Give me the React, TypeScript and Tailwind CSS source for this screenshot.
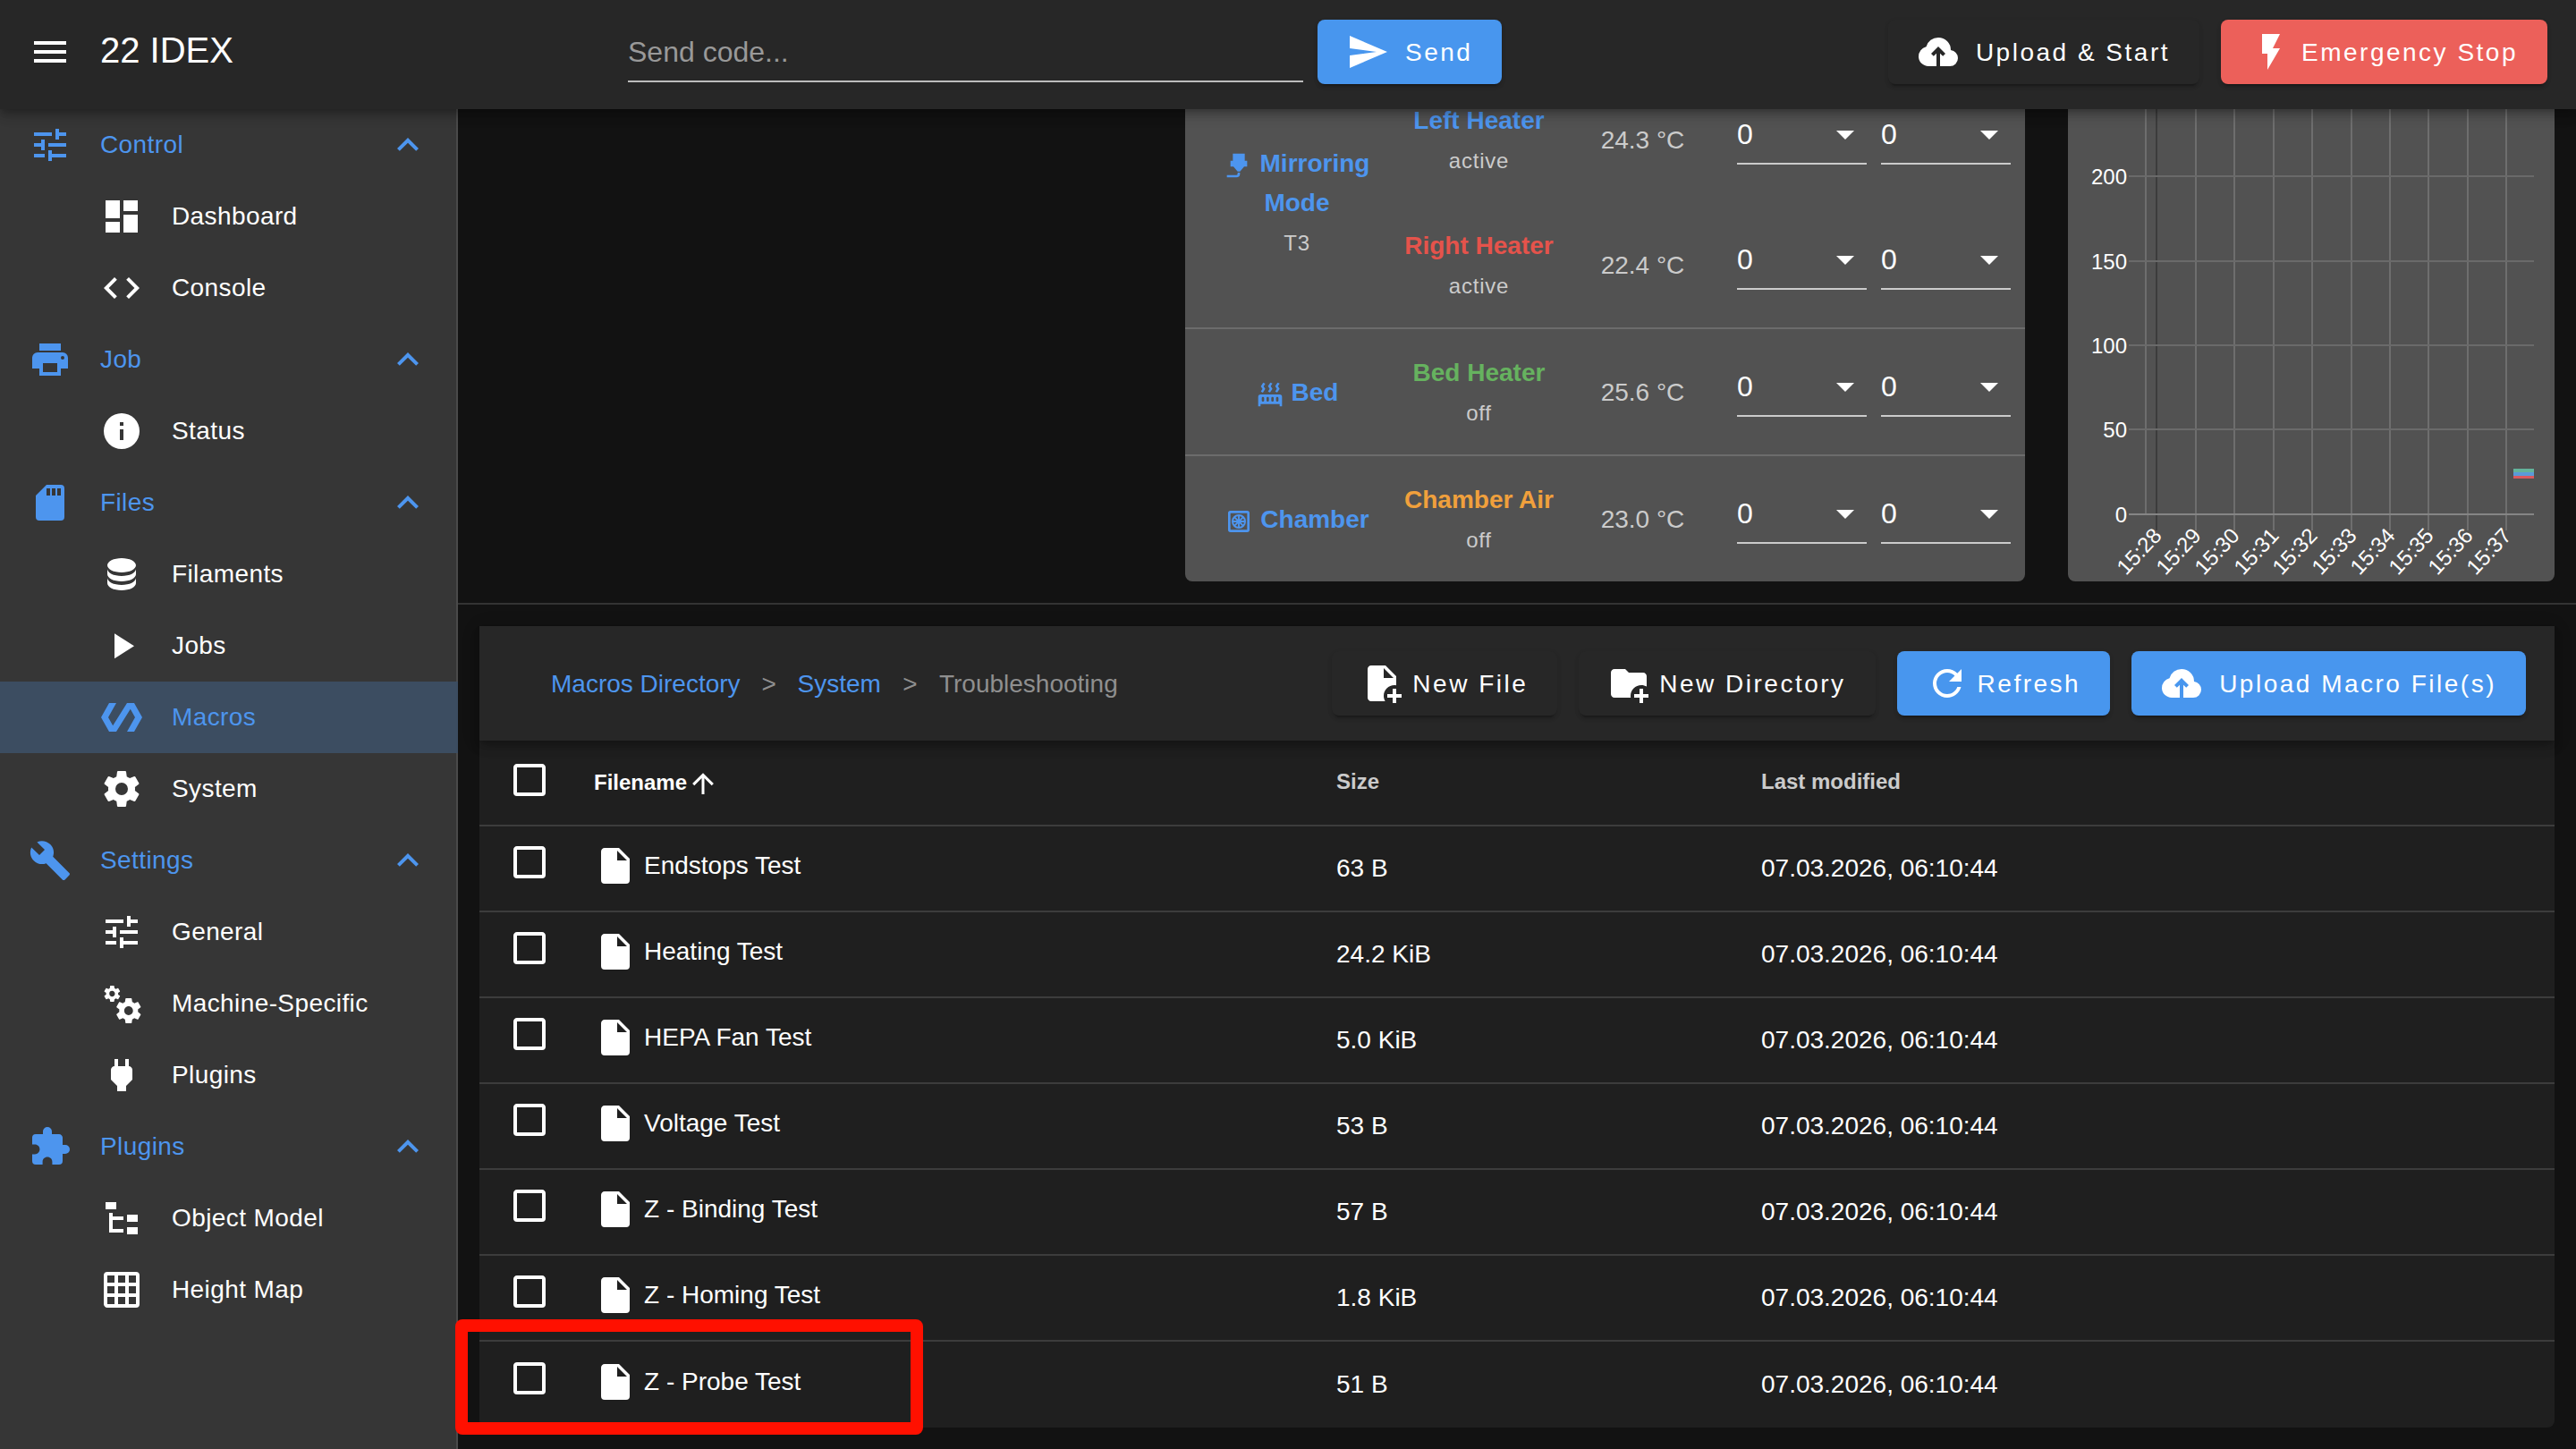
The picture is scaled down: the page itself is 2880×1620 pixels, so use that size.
import { useState } from "react";

const icons = {
  menu: "M3,6H21V8H3V6M3,11H21V13H3V11M3,16H21V18H3V16Z",
  tune: "M3,17V19H9V17H3M3,5V7H13V5H3M13,21V19H21V17H13V15H11V21H13M7,9V11H3V13H7V15H9V9H7M21,13V11H11V13H21M15,9H17V7H21V5H17V3H15V9Z",
  dashboard: "M13,3V9H21V3M13,21H21V11H13M3,21H11V15H3M3,13H11V3H3V13Z",
  code: "M14.6,16.6L19.2,12L14.6,7.4L16,6L22,12L16,18L14.6,16.6M9.4,16.6L4.8,12L9.4,7.4L8,6L2,12L8,18L9.4,16.6Z",
  printer:
    "M18,3H6V7H18M19,12A1,1 0 0,1 18,11A1,1 0 0,1 19,10A1,1 0 0,1 20,11A1,1 0 0,1 19,12M16,19H8V14H16M19,8H5A3,3 0 0,0 2,11V17H6V21H18V17H22V11A3,3 0 0,0 19,8Z",
  info: "M13,9H11V7H13M13,17H11V11H13M12,2A10,10 0 0,0 2,12A10,10 0 0,0 12,22A10,10 0 0,0 22,12A10,10 0 0,0 12,2Z",
  sd: "M18,8H16V4H18M15,8H13V4H15M12,8H10V4H12M18,2H10L4,8V20A2,2 0 0,0 6,22H18A2,2 0 0,0 20,20V4A2,2 0 0,0 18,2Z",
  database:
    "M12,3C7.58,3 4,4.79 4,7C4,9.21 7.58,11 12,11C16.42,11 20,9.21 20,7C20,4.79 16.42,3 12,3M4,9V12C4,14.21 7.58,16 12,16C16.42,16 20,14.21 20,12V9C20,11.21 16.42,13 12,13C7.58,13 4,11.21 4,9M4,14V17C4,19.21 7.58,21 12,21C16.42,21 20,19.21 20,17V14C20,16.21 16.42,18 12,18C7.58,18 4,16.21 4,14Z",
  play: "M8,5.14V19.14L19,12.14L8,5.14Z",
  polymer:
    "M19,4H15L7.1,16.63L4.5,12L9,4H5L0.5,12L5,20H9L16.89,7.37L19.5,12L15,20H19L23.5,12L19,4Z",
  cog: "M12,15.5A3.5,3.5 0 0,1 8.5,12A3.5,3.5 0 0,1 12,8.5A3.5,3.5 0 0,1 15.5,12A3.5,3.5 0 0,1 12,15.5M19.43,12.97C19.47,12.65 19.5,12.33 19.5,12C19.5,11.67 19.47,11.34 19.43,11L21.54,9.37C21.73,9.22 21.78,8.95 21.66,8.73L19.66,5.27C19.54,5.05 19.27,4.96 19.05,5.05L16.56,6.05C16.04,5.66 15.5,5.32 14.87,5.07L14.5,2.42C14.46,2.18 14.25,2 14,2H10C9.75,2 9.54,2.18 9.5,2.42L9.13,5.07C8.5,5.32 7.96,5.66 7.44,6.05L4.95,5.05C4.73,4.96 4.46,5.05 4.34,5.27L2.34,8.73C2.21,8.95 2.27,9.22 2.46,9.37L4.57,11C4.53,11.34 4.5,11.67 4.5,12C4.5,12.33 4.53,12.65 4.57,12.97L2.46,14.63C2.27,14.78 2.21,15.05 2.34,15.27L4.34,18.73C4.46,18.95 4.73,19.03 4.95,18.95L7.44,17.94C7.96,18.34 8.5,18.68 9.13,18.93L9.5,21.58C9.54,21.82 9.75,22 10,22H14C14.25,22 14.46,21.82 14.5,21.58L14.87,18.93C15.5,18.67 16.04,18.34 16.56,17.94L19.05,18.95C19.27,19.03 19.54,18.95 19.66,18.73L21.66,15.27C21.78,15.05 21.73,14.78 21.54,14.63L19.43,12.97Z",
  wrench:
    "M22.7,19L13.6,9.9C14.5,7.6 14,4.9 12.1,3C10.1,1 7.1,0.6 4.7,1.7L9,6L6,9L1.6,4.7C0.4,7.1 0.9,10.1 2.9,12.1C4.8,14 7.5,14.5 9.8,13.6L18.9,22.7C19.3,23.1 19.9,23.1 20.3,22.7L22.6,20.4C23.1,20 23.1,19.3 22.7,19Z",
  cogs: "M15.9,18.45C17.25,18.45 18.35,17.35 18.35,16C18.35,14.65 17.25,13.55 15.9,13.55C14.54,13.55 13.45,14.65 13.45,16C13.45,17.35 14.54,18.45 15.9,18.45M21.1,16.68L22.58,17.84C22.71,17.95 22.75,18.13 22.66,18.29L21.26,20.71C21.17,20.86 21,20.92 20.83,20.86L19.09,20.16C18.73,20.44 18.33,20.67 17.91,20.85L17.64,22.7C17.62,22.87 17.47,23 17.3,23H14.5C14.32,23 14.18,22.87 14.15,22.7L13.89,20.85C13.46,20.67 13.07,20.44 12.71,20.16L10.96,20.86C10.81,20.92 10.62,20.86 10.54,20.71L9.14,18.29C9.05,18.13 9.09,17.95 9.22,17.84L10.7,16.68L10.65,16L10.7,15.31L9.22,14.16C9.09,14.05 9.05,13.86 9.14,13.71L10.54,11.29C10.62,11.13 10.81,11.07 10.96,11.13L12.71,11.84C13.07,11.56 13.46,11.32 13.89,11.15L14.15,9.29C14.18,9.13 14.32,9 14.5,9H17.3C17.47,9 17.62,9.13 17.64,9.29L17.91,11.15C18.33,11.32 18.73,11.56 19.09,11.84L20.83,11.13C21,11.07 21.17,11.13 21.26,11.29L22.66,13.71C22.75,13.86 22.71,14.05 22.58,14.16L21.1,15.31L21.15,16L21.1,16.68M6.69,8.07C7.56,8.07 8.26,7.37 8.26,6.5C8.26,5.63 7.56,4.92 6.69,4.92A1.58,1.58 0 0,0 5.11,6.5C5.11,7.37 5.82,8.07 6.69,8.07M10.03,6.94L11,7.68C11.07,7.75 11.09,7.87 11.03,7.97L10.13,9.53C10.08,9.63 9.96,9.67 9.86,9.63L8.74,9.18L8,9.62L7.81,10.81C7.79,10.92 7.7,11 7.59,11H5.79C5.67,11 5.58,10.92 5.56,10.81L5.4,9.62L4.64,9.18L3.52,9.63C3.41,9.67 3.3,9.63 3.24,9.53L2.34,7.97C2.28,7.87 2.31,7.75 2.39,7.68L3.34,6.94L3.31,6.5L3.34,6.06L2.39,5.32C2.31,5.25 2.28,5.13 2.34,5.03L3.24,3.47C3.3,3.37 3.41,3.33 3.52,3.37L4.63,3.82L5.4,3.38L5.56,2.19C5.58,2.08 5.67,2 5.79,2H7.59C7.7,2 7.79,2.08 7.81,2.19L8,3.38L8.74,3.82L9.86,3.37C9.96,3.33 10.08,3.37 10.13,3.47L11.03,5.03C11.09,5.13 11.07,5.25 11,5.32L10.03,6.06L10.06,6.5L10.03,6.94Z",
  plug: "M16,7V3H14V7H10V3H8V7H8C7,7 6,8 6,9V14.5L9.5,18V21H14.5V18L18,14.5V9C18,8 17,7 16,7Z",
  puzzle:
    "M20.5,11H19V7C19,5.89 18.1,5 17,5H13V3.5A2.5,2.5 0 0,0 10.5,1A2.5,2.5 0 0,0 8,3.5V5H4A2,2 0 0,0 2,7V10.8H3.5C5,10.8 6.2,12 6.2,13.5C6.2,15 5,16.2 3.5,16.2H2V20A2,2 0 0,0 4,22H7.8V20.5C7.8,19 9,17.8 10.5,17.8C12,17.8 13.2,19 13.2,20.5V22H17A2,2 0 0,0 19,20V16H20.5A2.5,2.5 0 0,0 23,13.5A2.5,2.5 0 0,0 20.5,11Z",
  tree: "M3,3H9V7H3V3M15,10H21V14H15V10M15,17H21V21H15V17M13,13H7V18H13V20H7L5,20V9H7V11H13V13Z",
  grid: "M10,4V8H14V4H10M16,4V8H20V4H16M16,10V14H20V10H16M16,16V20H20V16H16M14,20V16H10V20H14M8,20V16H4V20H8M8,14V10H4V14H8M8,8V4H4V8H8M10,14H14V10H10V14M4,2H20A2,2 0 0,1 22,4V20A2,2 0 0,1 20,22H4C2.92,22 2,21.1 2,20V4A2,2 0 0,1 4,2Z",
  chevronUp: "M7.41,15.41L12,10.83L16.59,15.41L18,14L12,8L6,14L7.41,15.41Z",
  send: "M2,21L23,12L2,3V10L17,12L2,14V21Z",
  cloudUpload:
    "M11 20H6.5Q4.22 20 2.61 18.43 1 16.85 1 14.58 1 12.63 2.17 11.1 3.35 9.57 5.25 9.15 5.88 6.85 7.75 5.43 9.63 4 12 4 14.93 4 16.96 6.04 19 8.07 19 11 20.73 11.2 21.86 12.5 23 13.78 23 15.5 23 17.38 21.69 18.69 20.38 20 18.5 20H13V12.85L14.6 14.4L16 13L12 9L8 13L9.4 14.4L11 12.85Z",
  flash: "M7,2V13H10V22L17,10H13L17,2H7Z",
  file: "M13,9V3.5L18.5,9M6,2C4.89,2 4,2.89 4,4V20A2,2 0 0,0 6,22H18A2,2 0 0,0 20,20V8L14,2H6Z",
  filePlus:
    "M14 2H6C4.89 2 4 2.89 4 4V20C4 21.11 4.89 22 6 22H13.81C13.28 21.09 13 20.05 13 19C13 15.69 15.69 13 19 13C19.34 13 19.67 13.03 20 13.08V8L14 2M13 9V3.5L18.5 9H13M23 20H20V23H18V20H15V18H18V15H20V18H23V20Z",
  folderPlus:
    "M13 19C13 19.34 13.04 19.67 13.09 20H4C2.9 20 2 19.11 2 18V6C2 4.89 2.89 4 4 4H10L12 6H20C21.1 6 22 6.89 22 8V13.81C21.12 13.3 20.1 13 19 13C15.69 13 13 15.69 13 19M20 18V15H18V18H15V20H18V23H20V20H23V18H20Z",
  refresh:
    "M17.65,6.35C16.2,4.9 14.21,4 12,4A8,8 0 0,0 4,12A8,8 0 0,0 12,20C15.73,20 18.84,17.45 19.73,14H17.65C16.83,16.33 14.61,18 12,18A6,6 0 0,1 6,12A6,6 0 0,1 12,6C13.66,6 15.14,6.69 16.22,7.78L13,11H20V4L17.65,6.35Z",
  arrowUp:
    "M13,20H11V8L5.5,13.5L4.08,12.08L12,4.16L19.92,12.08L18.5,13.5L13,8V20Z",
  checkbox:
    "M19,3H5C3.89,3 3,3.89 3,5V19A2,2 0 0,0 5,21H19A2,2 0 0,0 21,19V5C21,3.89 20.1,3 19,3M19,5V19H5V5H19Z",
  menuDown: "M7,10L12,15L17,10H7Z",
  nozzle:
    "M7,2H17V8H19V13H16.5L13,17H11L7.5,13H5V8H7V2M10,22H2V20H10A1,1 0 0,0 11,19V18H13V19A3,3 0 0,1 10,22Z",
  radiator:
    "M7.95,3L6.53,5.19L7.95,7.4H7.94L5.95,10.5L4.22,9.6L5.64,7.39L4.22,5.19L6.22,2.09L7.95,3M13.95,2.89L12.53,5.1L13.95,7.3L13.94,7.31L11.95,10.4L10.22,9.5L11.64,7.3L10.22,5.1L12.22,2L13.95,2.89M20,2.89L18.56,5.1L20,7.3V7.31L18,10.4L16.25,9.5L17.67,7.3L16.25,5.1L18.25,2L20,2.89M2,22V14A2,2 0 0,1 4,12H20A2,2 0 0,1 22,14V22H20V20H4V22H2M6,14A1,1 0 0,0 5,15V17A1,1 0 0,0 6,18A1,1 0 0,0 7,17V15A1,1 0 0,0 6,14M10,14A1,1 0 0,0 9,15V17A1,1 0 0,0 10,18A1,1 0 0,0 11,17V15A1,1 0 0,0 10,14M14,14A1,1 0 0,0 13,15V17A1,1 0 0,0 14,18A1,1 0 0,0 15,17V15A1,1 0 0,0 14,14M18,14A1,1 0 0,0 17,15V17A1,1 0 0,0 18,18A1,1 0 0,0 19,17V15A1,1 0 0,0 18,14Z",
  chamber:
    "M5,3H19A2,2 0 0,1 21,5V19A2,2 0 0,1 19,21H5A2,2 0 0,1 3,19V5A2,2 0 0,1 5,3M5,5V19H19V5H5M12,6A6,6 0 0,1 18,12A6,6 0 0,1 12,18A6,6 0 0,1 6,12A6,6 0 0,1 12,6M11.3,7.6A4.5,4.5 0 0,0 9.3,8.4L11.3,10.3V7.6M12.7,7.6V10.3L14.7,8.4A4.5,4.5 0 0,0 12.7,7.6M8.3,9.4A4.5,4.5 0 0,0 7.6,11.3H10.2L8.3,9.4M15.7,9.4L13.8,11.3H16.4A4.5,4.5 0 0,0 15.7,9.4M7.6,12.7A4.5,4.5 0 0,0 8.3,14.6L10.2,12.7H7.6M13.8,12.7L15.7,14.6A4.5,4.5 0 0,0 16.4,12.7H13.8M11.3,13.7L9.3,15.6A4.5,4.5 0 0,0 11.3,16.4V13.7M12.7,13.7V16.4A4.5,4.5 0 0,0 14.7,15.6L12.7,13.7Z",
};

type IconName = keyof typeof icons;

const Icon = ({
  name,
  className = "w-12 h-12",
}: {
  name: IconName;
  className?: string;
}) => (
  <svg viewBox="0 0 24 24" className={`shrink-0 ${className}`}>
    <path d={icons[name]} fill="currentColor" fillRule="evenodd" />
  </svg>
);

const menuGroups: {
  name: string;
  icon: IconName;
  items: { name: string; icon: IconName }[];
}[] = [
  {
    name: "Control",
    icon: "tune",
    items: [
      { name: "Dashboard", icon: "dashboard" },
      { name: "Console", icon: "code" },
    ],
  },
  { name: "Job", icon: "printer", items: [{ name: "Status", icon: "info" }] },
  {
    name: "Files",
    icon: "sd",
    items: [
      { name: "Filaments", icon: "database" },
      { name: "Jobs", icon: "play" },
      { name: "Macros", icon: "polymer" },
      { name: "System", icon: "cog" },
    ],
  },
  {
    name: "Settings",
    icon: "wrench",
    items: [
      { name: "General", icon: "tune" },
      { name: "Machine-Specific", icon: "cogs" },
      { name: "Plugins", icon: "plug" },
    ],
  },
  {
    name: "Plugins",
    icon: "puzzle",
    items: [
      { name: "Object Model", icon: "tree" },
      { name: "Height Map", icon: "grid" },
    ],
  },
];

const files = [
  { name: "Endstops Test", size: "63 B" },
  { name: "Heating Test", size: "24.2 KiB" },
  { name: "HEPA Fan Test", size: "5.0 KiB" },
  { name: "Voltage Test", size: "53 B" },
  { name: "Z - Binding Test", size: "57 B" },
  { name: "Z - Homing Test", size: "1.8 KiB" },
  { name: "Z - Probe Test", size: "51 B" },
];

const buttonShadow =
  "shadow-[0_6px_2px_-4px_rgba(0,0,0,0.2),0_4px_4px_0_rgba(0,0,0,0.1),0_2px_6px_0_rgba(0,0,0,0.06)]";

const Button = ({
  icon,
  label,
  color = "bg-[#272727]",
  gap = "gap-[10px]",
}: {
  icon: IconName;
  label: string;
  color?: string;
  gap?: string;
}) => (
  <button
    className={`h-[72px] pl-8 pr-[33px] flex items-center rounded-lg whitespace-nowrap text-[28px] leading-[40px] tracking-[2.5px] text-white cursor-pointer ${gap} ${color} ${buttonShadow}`}
  >
    <Icon name={icon} />
    <span className="mt-[2px]">{label}</span>
  </button>
);

const TempInput = () => (
  <div className="w-[145px] h-[70px] pt-[3px] flex items-center justify-between border-b-2 border-[#cbcbcb] text-[32px] text-white">
    <span>0</span>
    <Icon name="menuDown" />
  </div>
);

const HeaterRow = ({
  name,
  color,
  state,
  temp,
}: {
  name: string;
  color: string;
  state: string;
  temp: string;
}) => (
  <div className="h-[140px] flex">
    <div className="w-[156px] pt-[27px] pl-px flex flex-col items-center whitespace-nowrap">
      <span className={`text-[28px] leading-[44px] font-bold ${color}`}>
        {name}
      </span>
      <span className="pt-[3px] text-[24px] leading-[40px] tracking-[0.8px]">
        {state}
      </span>
    </div>
    <div className="w-[211px] pt-[2px] flex items-center justify-center text-[28px]">
      {temp}
    </div>
    <div className="pt-[28px] flex gap-4">
      <TempInput />
      <TempInput />
    </div>
  </div>
);

const ToolLabel = ({
  icon,
  label,
  second,
  sub,
}: {
  icon: IconName;
  label: string;
  second?: string;
  sub?: string;
}) => (
  <div className="w-[250px] pt-px flex flex-col items-center justify-center">
    <div className="flex items-center gap-2 text-[28px] leading-[44px] font-bold text-[#4d95ee]">
      <Icon name={icon} className="w-8 h-8 mt-[4px]" />
      {label}
    </div>
    {second && (
      <div className="text-[28px] leading-[44px] font-bold text-[#4d95ee]">
        {second}
      </div>
    )}
    {sub && (
      <div className="pt-[3px] text-[24px] leading-[40px] tracking-[0.8px]">
        {sub}
      </div>
    )}
  </div>
);

const yTicks = [
  { label: "200", y: 75 },
  { label: "150", y: 170 },
  { label: "100", y: 264 },
  { label: "50", y: 358 },
  { label: "0", y: 453 },
];

const xTicks = [
  { label: "15:28", x: 99 },
  { label: "15:29", x: 143 },
  { label: "15:30", x: 186 },
  { label: "15:31", x: 230 },
  { label: "15:32", x: 273 },
  { label: "15:33", x: 317 },
  { label: "15:34", x: 360 },
  { label: "15:35", x: 403 },
  { label: "15:36", x: 447 },
  { label: "15:37", x: 490 },
];

const TemperatureChart = () => (
  <svg width="544" height="528" viewBox="0 0 544 528" className="block">
    <line x1="87" x2="87" y1="0" y2="454" stroke="#6e6e6e" strokeWidth="2" />
    {xTicks.map(({ label, x }, i) => (
      <g key={label}>
        <line
          x1={x}
          x2={x}
          y1="0"
          y2="471"
          stroke={i === 0 ? "#3c3c3c" : "#6e6e6e"}
          strokeWidth="2"
        />
        <text
          transform={`translate(${x + 7} 478) rotate(-47)`}
          textAnchor="end"
          fontSize="24"
          fill="#fff"
        >
          {label}
        </text>
      </g>
    ))}
    {yTicks.map(({ label, y }) => (
      <g key={label}>
        <line
          x1="68"
          x2="521"
          y1={y}
          y2={y}
          stroke={label === "0" ? "#858585" : "#6a6a6a"}
          strokeWidth="2"
        />
        <text x="66" y={y + 9} textAnchor="end" fontSize="24" fill="#fff">
          {label}
        </text>
      </g>
    ))}
    {/* Latest samples */}
    <rect x="498" y="402" width="23" height="4" fill="#63b39b" />
    <rect x="498" y="406" width="23" height="4" fill="#5a9ad8" />
    <rect x="498" y="410" width="23" height="3" fill="#d9595f" />
  </svg>
);

const App = () => {
  const [active, setActive] = useState("Macros");

  return (
    <div className="relative w-[2880px] h-[1620px] overflow-hidden flex flex-col bg-[#121212] text-[#cbcbcb] font-['Liberation_Sans',Arial,sans-serif]">
      {/* App Bar */}
      <header className="relative z-10 h-[122px] shrink-0 flex items-start bg-[#272727] pl-8 pr-8 shadow-[0_4px_8px_-2px_rgba(0,0,0,0.2),0_8px_10px_0_rgba(0,0,0,0.14),0_2px_20px_0_rgba(0,0,0,0.12)]">
        <div className="w-[670px] pt-[34px] flex items-center gap-8 text-white">
          <Icon name="menu" />
          <span className="text-[40px] leading-[48px] -mt-1">22 IDEX</span>
        </div>
        <div className="w-[755px] h-[92px] pt-[34px] border-b-2 border-[#bdbdbd] text-[32px] leading-[48px] text-[#999999]">
          Send code...
        </div>
        <div className="pt-[22px] pl-4">
          <Button
            icon="send"
            label="Send"
            color="bg-[#4896ee]"
            gap="gap-[18px]"
          />
        </div>
        <div className="flex-1 pt-[22px] flex justify-end gap-6">
          <Button icon="cloudUpload" label="Upload & Start" gap="gap-[18px]" />
          <Button icon="flash" label="Emergency Stop" color="bg-[#ec605a]" />
        </div>
      </header>

      <div className="flex flex-1 min-h-0">
        {/* Sidebar */}
        <nav className="w-[512px] shrink-0 bg-[#363636] border-r-2 border-[#4a4a4a] text-[28px] tracking-[0.4px]">
          {menuGroups.map((group) => (
            <div key={group.name}>
              <div className="h-20 pl-8 pr-[30px] flex items-center gap-8 text-[#4d95ee]">
                <Icon name={group.icon} />
                <span className="flex-1">{group.name}</span>
                <Icon name="chevronUp" />
              </div>
              {group.items.map((item) => (
                <div
                  key={item.name}
                  onClick={() => setActive(item.name)}
                  className={`h-20 pl-28 flex items-center gap-8 cursor-pointer ${
                    active === item.name
                      ? "bg-[#3c4d61] text-[#4d95ee] -mr-[2px]"
                      : "text-white"
                  }`}
                >
                  <Icon name={item.icon} />
                  <span>{item.name}</span>
                </div>
              ))}
            </div>
          ))}
        </nav>

        <main className="flex-1 min-w-0 flex flex-col">
          {/* Heaters and chart */}
          <div className="h-[528px] shrink-0 flex justify-end gap-12 pr-6">
            <div className="w-[939px] overflow-hidden rounded-b-lg bg-[#525252]">
              <div className="-mt-9 flex">
                <ToolLabel
                  icon="nozzle"
                  label="Mirroring"
                  second="Mode"
                  sub="T3"
                />
                <div>
                  <HeaterRow
                    name="Left Heater"
                    color="text-[#4d95ee]"
                    state="active"
                    temp="24.3 °C"
                  />
                  <HeaterRow
                    name="Right Heater"
                    color="text-[#e5534b]"
                    state="active"
                    temp="22.4 °C"
                  />
                </div>
              </div>
              <div className="flex border-t-2 border-[#6c6c6c]">
                <ToolLabel icon="radiator" label="Bed" />
                <HeaterRow
                  name="Bed Heater"
                  color="text-[#66b25f]"
                  state="off"
                  temp="25.6 °C"
                />
              </div>
              <div className="flex border-t-2 border-[#6c6c6c]">
                <ToolLabel icon="chamber" label="Chamber" />
                <HeaterRow
                  name="Chamber Air"
                  color="text-[#f0a03c]"
                  state="off"
                  temp="23.0 °C"
                />
              </div>
            </div>
            <div className="w-[544px] overflow-hidden rounded-b-lg bg-[#525252]">
              <TemperatureChart />
            </div>
          </div>

          <div className="mt-6 h-[2px] shrink-0 bg-[#333333]" />

          {/* File list */}
          <div className="mt-6 ml-6 mr-6 h-[896px] shrink-0 flex flex-col rounded-b-lg bg-[#1f1f1f]">
            <div className="relative h-[128px] shrink-0 flex items-center pl-20 pr-8 bg-[#272727] shadow-[0_4px_8px_-2px_rgba(0,0,0,0.2),0_8px_10px_0_rgba(0,0,0,0.14),0_2px_20px_0_rgba(0,0,0,0.12)]">
              <div className="flex-1 pt-[2px] flex text-[28px] leading-[40px] whitespace-nowrap text-[#8f8f8f]">
                <span className="text-[#4d95ee]">Macros Directory</span>
                <span className="w-16 text-center">&gt;</span>
                <span className="text-[#4d95ee]">System</span>
                <span className="w-[65px] text-center">&gt;</span>
                <span>Troubleshooting</span>
              </div>
              <div className="flex gap-6">
                <Button icon="filePlus" label="New File" />
                <Button icon="folderPlus" label="New Directory" />
                <Button
                  icon="refresh"
                  label="Refresh"
                  color="bg-[#4896ee]"
                />
                <Button
                  icon="cloudUpload"
                  label="Upload Macro File(s)"
                  color="bg-[#4896ee]"
                  gap="gap-[18px]"
                />
              </div>
            </div>

            <div className="h-[94px] shrink-0 flex items-center pl-8 text-[24px] leading-[34px] font-bold">
              <div className="w-24 text-white">
                <Icon name="checkbox" className="w-12 h-12 -mt-[6px]" />
              </div>
              <div className="w-[830px] -mt-px flex items-center text-white">
                Filename
                <Icon name="arrowUp" className="w-9 h-9 mt-[3px]" />
              </div>
              <div className="w-[475px] -mt-[2px]">Size</div>
              <div className="-mt-[2px]">Last modified</div>
            </div>
            {files.map((file) => (
              <div
                key={file.name}
                className="h-24 last:h-[98px] shrink-0 flex items-center pl-8 border-t-2 border-[#3c3c3c] text-[28px] text-white"
              >
                <div className="w-24">
                  <Icon name="checkbox" className="w-12 h-12 -mt-[14px]" />
                </div>
                <div className="w-[830px] flex items-center gap-2 -mt-[6px]">
                  <Icon name="file" />
                  {file.name}
                </div>
                <div className="w-[475px]">{file.size}</div>
                <div>07.03.2026, 06:10:44</div>
              </div>
            ))}
          </div>
        </main>
      </div>

      {/* Highlight around the last file */}
      <div className="absolute z-20 left-[509px] top-[1475px] w-[523px] h-[129px] rounded-lg border-[14px] border-[#ff1000]" />
    </div>
  );
};

export default App;
